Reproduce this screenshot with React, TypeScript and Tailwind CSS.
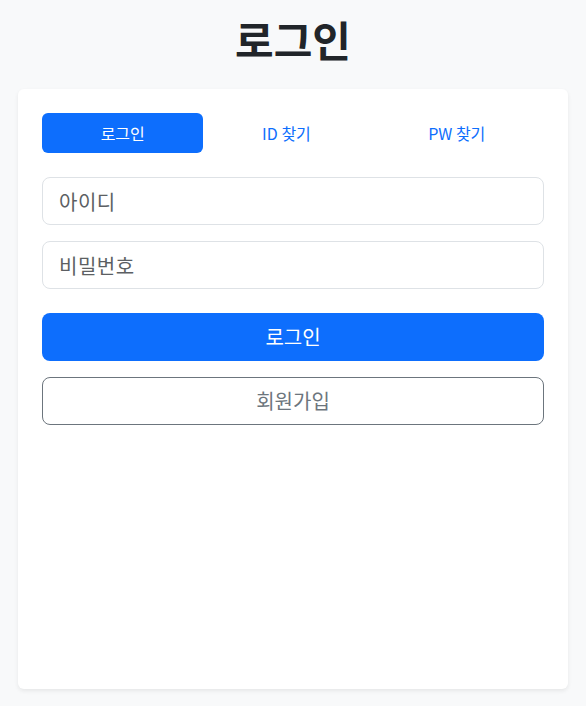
import { type FC, useState } from 'react';

const tabs = ['로그인', 'ID 찾기', 'PW 찾기'];

const App: FC = () => {
  const [active, setActive] = useState(0);

  return (
    <main
      className="min-h-[706px] bg-[#f8f9fa] px-[18px] pt-[15px] text-[#212529]"
      style={{ fontFamily: '"Noto Sans CJK KR", "Noto Sans", sans-serif' }}
    >
      <h1 className="mb-[26px] text-center text-[42px] font-bold leading-[48px]">
        로그인
      </h1>
      <section className="h-[600px] rounded-[6px] bg-white p-6 shadow-[0_2px_4px_rgba(0,0,0,0.075)]">
        <nav className="flex">
          {tabs.map((tab, i) => (
            <span
              key={tab}
              onClick={() => setActive(i)}
              className={`flex h-10 flex-auto cursor-pointer items-center justify-center rounded-[6px] px-4 text-base ${
                active === i ? 'bg-[#0d6efd] text-white' : 'text-[#0d6efd]'
              }`}
            >
              {tab}
            </span>
          ))}
        </nav>
        <div className="mt-6 flex flex-col gap-4">
          <input
            placeholder="아이디"
            className="h-12 rounded-lg border border-[#dee2e6] px-4 text-[20px] tracking-[0.5px] outline-none placeholder:text-[#5c5f63]"
          />
          <input
            type="password"
            placeholder="비밀번호"
            className="h-12 rounded-lg border border-[#dee2e6] px-4 text-[20px] tracking-[0.5px] outline-none placeholder:text-[#5c5f63]"
          />
        </div>
        <div className="mt-6 flex flex-col gap-4">
          <button className="h-12 rounded-lg bg-[#0d6efd] text-[20px] text-white">
            로그인
          </button>
          <button className="h-12 rounded-lg border border-[#6c757d] text-[20px] text-[#6c757d]">
            회원가입
          </button>
        </div>
      </section>
    </main>
  );
};

export default App;
